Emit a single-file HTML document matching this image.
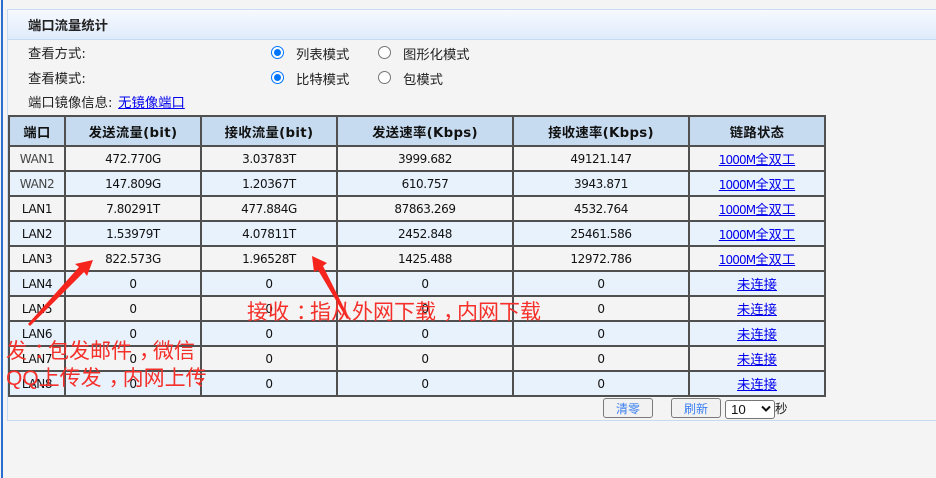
<!DOCTYPE html>
<html><head><meta charset="utf-8"><style>
html,body{margin:0;padding:0;width:936px;height:478px;overflow:hidden;background:#f4f4f4}
body{position:relative;font-family:"DejaVu Sans","Noto Sans CJK SC",sans-serif;font-size:12px;color:#222}
.abs{position:absolute;white-space:nowrap}
.lbl{font-size:13.33px;line-height:18px;font-family:"Liberation Sans","Noto Sans CJK SC",sans-serif}
.col{font-family:"DejaVu Sans",sans-serif;margin-right:1px}
a{color:#0000ee;text-decoration:underline}
td a{position:relative;top:-1px;letter-spacing:-.9px}
table{position:absolute;left:8px;top:115px;border-collapse:collapse;table-layout:fixed;width:818px}
td,th{border:2px solid #505050;text-align:center;padding:0;height:23px;font-size:12px;letter-spacing:-.4px;font-weight:normal;color:#111}
td{padding-top:1px;height:22px}
th{background:#c6dbf0;height:28px;font-weight:bold;font-size:13.33px;color:#111;letter-spacing:.3px}
tr.b td{background:#e8f2fc}
tr.a td{background:#f4f4f4}
.c{font-size:13.33px;letter-spacing:0}
.p{color:#444}
.r{position:absolute;width:13px;height:13px;border-radius:50%;box-sizing:border-box}
.on{border:1.5px solid #0075ff;background:#fff}
.on:after{content:"";position:absolute;left:1.5px;top:1.5px;width:7px;height:7px;border-radius:50%;background:#0075ff}
.off{border:1px solid #767676;background:#fff}
.btn{position:absolute;top:398px;width:50px;height:20px;box-sizing:border-box;border:1px solid #7a7a7a;border-radius:3px;background:#f2f2f2;color:#3a7ff0;font-size:12px;line-height:20px;text-align:center}
.red{position:absolute;color:#f5302a;font-size:21px;line-height:24px;white-space:nowrap;font-family:"Liberation Sans","Noto Sans CJK SC",sans-serif}
.pc{position:relative;left:7px}
</style></head><body>
<div class="abs" style="left:1px;top:0;width:1.5px;height:478px;background:#2a6fd0"></div>
<div class="abs" style="left:7px;top:9px;width:929px;height:412px;box-sizing:border-box;border:1px solid #c7dcf2;border-right:0"></div>
<div class="abs" style="left:8px;top:10px;width:928px;height:29px;background:linear-gradient(#f7faff,#dfebfb);border-bottom:1px solid #c7dcf2"></div>
<div class="abs lbl" style="left:28px;top:17px;font-weight:bold">端口流量统计</div>
<div class="abs lbl" style="left:28px;top:45px">查看方式<span class="col">:</span></div>
<div class="abs lbl" style="left:28px;top:70px">查看模式<span class="col">:</span></div>
<div class="abs lbl" style="left:28px;top:94px">端口镜像信息<span class="col" style="margin-right:2px">:</span> <a href="#">无镜像端口</a></div>
<div class="r on" style="left:271px;top:46px"></div>
<div class="r off" style="left:378px;top:46px"></div>
<div class="r on" style="left:271px;top:71px"></div>
<div class="r off" style="left:378px;top:71px"></div>
<div class="abs lbl" style="left:296px;top:46px">列表模式</div>
<div class="abs lbl" style="left:403px;top:46px">图形化模式</div>
<div class="abs lbl" style="left:296px;top:71px">比特模式</div>
<div class="abs lbl" style="left:403px;top:71px">包模式</div>
<table>
<colgroup><col style="width:56px"><col style="width:136px"><col style="width:136px"><col style="width:176px"><col style="width:176px"><col style="width:136px"></colgroup>
<tr><th>端口</th><th>发送流量(bit)</th><th>接收流量(bit)</th><th>发送速率(Kbps)</th><th>接收速率(Kbps)</th><th>链路状态</th></tr>
<tr class="a"><td class="p">WAN1</td><td>472.770G</td><td>3.03783T</td><td>3999.682</td><td>49121.147</td><td><a href="#">1000M<span class="c">全双工</span></a></td></tr>
<tr class="b"><td class="p">WAN2</td><td>147.809G</td><td>1.20367T</td><td>610.757</td><td>3943.871</td><td><a href="#">1000M<span class="c">全双工</span></a></td></tr>
<tr class="a"><td>LAN1</td><td>7.80291T</td><td>477.884G</td><td>87863.269</td><td>4532.764</td><td><a href="#">1000M<span class="c">全双工</span></a></td></tr>
<tr class="b"><td>LAN2</td><td>1.53979T</td><td>4.07811T</td><td>2452.848</td><td>25461.586</td><td><a href="#">1000M<span class="c">全双工</span></a></td></tr>
<tr class="a"><td>LAN3</td><td>822.573G</td><td>1.96528T</td><td>1425.488</td><td>12972.786</td><td><a href="#">1000M<span class="c">全双工</span></a></td></tr>
<tr class="b"><td>LAN4</td><td>0</td><td>0</td><td>0</td><td>0</td><td><a href="#"><span class="c">未连接</span></a></td></tr>
<tr class="a"><td>LAN5</td><td>0</td><td>0</td><td>0</td><td>0</td><td><a href="#"><span class="c">未连接</span></a></td></tr>
<tr class="b"><td>LAN6</td><td>0</td><td>0</td><td>0</td><td>0</td><td><a href="#"><span class="c">未连接</span></a></td></tr>
<tr class="a"><td>LAN7</td><td>0</td><td>0</td><td>0</td><td>0</td><td><a href="#"><span class="c">未连接</span></a></td></tr>
<tr class="b"><td>LAN8</td><td>0</td><td>0</td><td>0</td><td>0</td><td><a href="#"><span class="c">未连接</span></a></td></tr>
</table>
<div class="btn" style="left:603px">清零</div>
<div class="btn" style="left:671px">刷新</div>
<div class="abs" style="left:725px;top:400px;width:50px;height:19px;box-sizing:border-box;border:1px solid #767676;border-radius:3px;background:#fff;font-size:13.33px;line-height:17px;padding-left:5px;color:#111;font-family:'Liberation Sans',sans-serif">10</div>
<svg class="abs" style="left:761px;top:405px" width="11" height="8"><path d="M1 1.5L5 5.5L9 1.5" fill="none" stroke="#111" stroke-width="2"/></svg>
<div class="abs" style="left:775px;top:400px;font-size:12.5px;line-height:18px;color:#222">秒</div>
<svg class="abs" style="left:0;top:0" width="936" height="478">
<path d="M28 324L79 267L75 264L93 260L87 276L84 272L30 326Z" fill="#f5241c"/>
<path d="M349 318L323 266L327 263L312 256L314 272L318 270L347 319Z" fill="#f5241c"/>
</svg>
<div class="red" style="left:247px;top:301px">接收<span class="pc">：</span>指从外网下载<span class="pc">，</span>内网下载</div>
<div class="red" style="left:6px;top:340px">发<span class="pc">：</span>包发邮件<span class="pc">，</span>微信</div>
<div class="red" style="left:6px;top:367px">QQ<span>上传发</span><span class="pc">，</span>内网上传</div>
</body></html>
